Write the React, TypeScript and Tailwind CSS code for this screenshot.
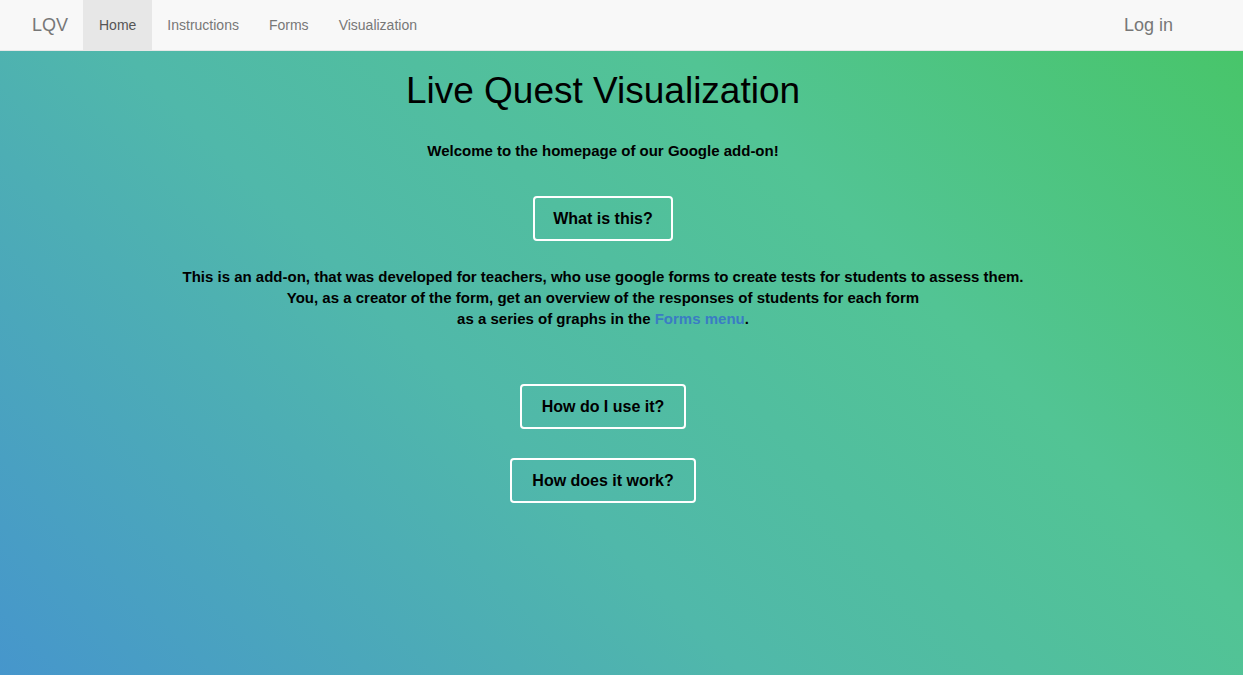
export default function App() {
  const font = { fontFamily: '"Liberation Sans", Arial, Helvetica, sans-serif' };

  return (
    <div className="min-h-screen flex flex-col" style={font}>
      <nav className="h-[51px] bg-[#f8f8f8] border-b border-[#e7e7e7] flex items-stretch justify-between pl-[15px] pr-[70px]">
        <div className="flex items-stretch">
          <a className="w-[68px] px-[17px] flex items-center text-[18px] text-[#777]">LQV</a>
          <a className="px-[16px] flex items-center text-[14px] text-[#555] bg-[#e7e7e7]">Home</a>
          <a className="px-[15px] flex items-center text-[14px] text-[#777]">Instructions</a>
          <a className="px-[15px] flex items-center text-[14px] text-[#777]">Forms</a>
          <a className="px-[15px] flex items-center text-[14px] text-[#777]">Visualization</a>
        </div>
        <a className="flex items-center text-[18px] text-[#777]">Log in</a>
      </nav>

      <main className="flex-1 bg-[linear-gradient(45deg,#4696cc_0%,#50b8aa_40%,#52c494_70%,#48c56a_100%)] pr-[37px] flex flex-col items-center text-black">
        <h1 className="mt-[20px] text-[37px] leading-[40px] font-medium">Live Quest Visualization</h1>
        <p className="mt-[30px] text-[15px] leading-[20px] font-bold">
          Welcome to the homepage of our Google add-on!
        </p>
        <button className="mt-[35px] h-[45px] px-[18px] border-2 border-white rounded-[4px] text-[16px] font-bold">
          What is this?
        </button>
        <p className="mt-[25px] text-[15px] leading-[21px] font-bold text-center">
          This is an add-on, that was developed for teachers, who use google forms to create tests for students to assess them.
          <br />
          You, as a creator of the form, get an overview of the responses of students for each form
          <br />
          as a series of graphs in the <a className="text-[#3a7cc4]">Forms menu</a>.
        </p>
        <button className="mt-[55px] h-[45px] px-[20px] border-2 border-white rounded-[4px] text-[16px] font-bold">
          How do I use it?
        </button>
        <button className="mt-[29px] h-[45px] px-[20px] border-2 border-white rounded-[4px] text-[16px] font-bold">
          How does it work?
        </button>
      </main>
    </div>
  );
}
